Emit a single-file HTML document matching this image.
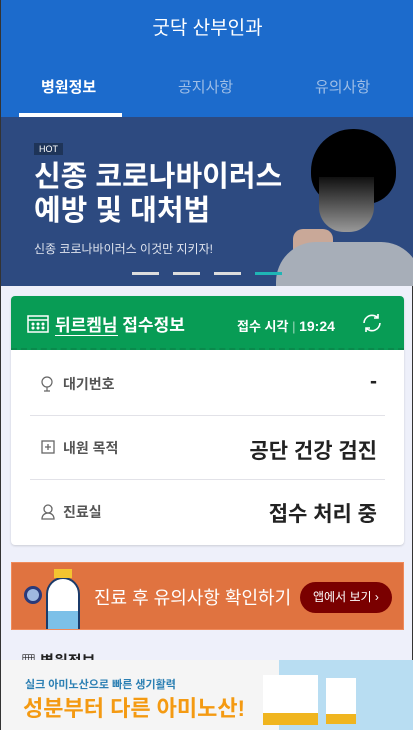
<!DOCTYPE html>
<html><head><meta charset="utf-8"><style>
*{margin:0;padding:0;box-sizing:border-box}
body{width:413px;height:730px;overflow:hidden;background:#eef0fa;font-family:"Liberation Sans","Noto Sans CJK KR",sans-serif;position:relative;border-left:1px solid #333;border-right:1px solid #333}
.hdr{position:absolute;left:0;top:0;width:413px;height:58px;background:#1c6bcc;color:#fff;font-size:19px;text-align:center;line-height:58px}
.tabs{position:absolute;left:0;top:58px;width:413px;height:59px;background:#1c6bcc}
.tab{position:absolute;top:18px;font-size:15px;color:#9dbde6}
.ban{position:absolute;left:0;top:117px;width:413px;height:169px;background:#2d4a80;overflow:hidden}
.card{position:absolute;left:10px;top:296px;width:393px;height:249px;background:#fff;border-radius:4px;box-shadow:0 1px 2px rgba(0,0,0,.15)}
.gh{height:54px;background:#089c55;border-radius:4px 4px 0 0;color:#fff;position:relative;border-bottom:2px dashed #0a8a4c}
.row{position:absolute;left:19px;right:19px;height:64px;border-bottom:1px solid #e2e2e8}
.lab{position:absolute;left:33px;top:22px;font-size:14px;color:#555;font-weight:bold}
.val{position:absolute;right:8px;font-weight:bold;color:#222;font-size:21px}
.ic{position:absolute;left:11px;top:24px}
</style></head><body>
<div class="hdr">굿닥 산부인과</div>
<div class="tabs">
<div class="tab" style="left:40px;color:#fff;font-weight:bold">병원정보</div>
<div class="tab" style="left:177px">공지사항</div>
<div class="tab" style="left:314px">유의사항</div>
<div style="position:absolute;left:18px;top:55px;width:103px;height:4px;background:#fff"></div>
</div>
<div class="ban">
<div style="position:absolute;left:33px;top:26px;background:#1e3458;color:#fff;font-size:9px;padding:1px 5px">HOT</div>
<div style="position:absolute;left:33px;top:43px;color:#fff;font-size:29px;font-weight:bold;line-height:34px">신종 코로나바이러스<br>예방 및 대처법</div>
<div style="position:absolute;left:33px;top:123px;color:#dfe4ee;font-size:12px">신종 코로나바이러스 이것만 지키자!</div>
<div style="position:absolute;left:310px;top:12px;width:85px;height:75px;border-radius:42px 42px 30px 30px;background:#000"></div>
<div style="position:absolute;left:318px;top:60px;width:55px;height:55px;background:linear-gradient(#111,#999);border-radius:0 0 25px 25px"></div>
<div style="position:absolute;left:292px;top:112px;width:40px;height:30px;background:#c9a898;border-radius:10px"></div>
<div style="position:absolute;left:275px;top:125px;width:145px;height:60px;background:#a7aeb8;border-radius:40px 40px 0 0"></div>
<div style="position:absolute;left:131px;top:155px;width:27px;height:3px;background:#ddd"></div>
<div style="position:absolute;left:172px;top:155px;width:27px;height:3px;background:#ddd"></div>
<div style="position:absolute;left:213px;top:155px;width:27px;height:3px;background:#ddd"></div>
<div style="position:absolute;left:254px;top:155px;width:27px;height:3px;background:#1fb5b5"></div>
</div>
<div class="card">
<div class="gh">
<svg style="position:absolute;left:16px;top:17px" width="22" height="20" viewBox="0 0 22 20" fill="none" stroke="#fff" stroke-width="1.5"><rect x="1" y="3" width="20" height="16"/><line x1="1" y1="7" x2="21" y2="7"/><circle cx="6" cy="11" r=".8" fill="#fff"/><circle cx="11" cy="11" r=".8" fill="#fff"/><circle cx="16" cy="11" r=".8" fill="#fff"/><circle cx="6" cy="15" r=".8" fill="#fff"/><circle cx="11" cy="15" r=".8" fill="#fff"/><circle cx="16" cy="15" r=".8" fill="#fff"/></svg>
<div style="position:absolute;left:44px;top:15px;font-size:17px;font-weight:bold"><span style="border-bottom:1px solid #fff">뒤르켐님</span> 접수정보</div>
<div style="position:absolute;left:226px;top:20px;font-size:13px;font-weight:bold">접수 시각 <span style="opacity:.6;font-weight:normal">|</span> <span style="font-size:14px">19:24</span></div>
<svg style="position:absolute;left:350px;top:16px" width="22" height="22" viewBox="0 0 22 22" fill="none" stroke="#fff" stroke-width="1.6"><path d="M3 11a8 8 0 0 1 14-5"/><path d="M19 11a8 8 0 0 1-14 5"/><path d="M17 2v4h-4"/><path d="M5 20v-4h4"/></svg>
</div>
<div class="row" style="top:56px"><svg class="ic" width="12" height="16" viewBox="0 0 12 16" fill="none" stroke="#666" stroke-width="1.2"><circle cx="6" cy="6" r="5"/><path d="M6 11v4M3 15h6"/></svg><div class="lab">대기번호</div><div class="val" style="top:18px">-</div></div>
<div class="row" style="top:120px"><svg class="ic" width="14" height="14" viewBox="0 0 14 14" fill="none" stroke="#666" stroke-width="1.3"><rect x="1" y="1" width="12" height="12"/><path d="M7 4v6M4 7h6"/></svg><div class="lab">내원 목적</div><div class="val" style="top:19px">공단 건강 검진</div></div>
<div class="row" style="top:184px;border:none"><svg class="ic" width="14" height="16" viewBox="0 0 14 16" fill="none" stroke="#666" stroke-width="1.3"><circle cx="7" cy="5" r="4"/><path d="M1 15c0-4 3-6 6-6s6 2 6 6z"/></svg><div class="lab">진료실</div><div class="val" style="top:18px">접수 처리 중</div></div>
</div>
<div style="position:absolute;left:10px;top:562px;width:393px;height:68px;background:#e07340;border:1px solid #f08a5a;overflow:hidden">
<div style="position:absolute;left:34px;top:14px;width:34px;height:56px;background:#fff;border-radius:17px 17px 4px 4px;border:2px solid #1b3b6a;border-bottom:none;overflow:hidden"><div style="position:absolute;bottom:0;left:0;right:0;height:22px;background:#7cc0e8"></div></div>
<div style="position:absolute;left:42px;top:6px;width:18px;height:9px;background:#f4c430"></div>
<div style="position:absolute;left:12px;top:23px;width:18px;height:18px;border-radius:50%;border:3px solid #2a3a7a;background:#9fb8e0"></div>
<div style="position:absolute;left:82px;top:21px;color:#fff;font-size:18px">진료 후 유의사항 확인하기</div>
<div style="position:absolute;left:288px;top:19px;width:92px;height:31px;background:#7a0000;border-radius:16px;color:#fff;font-size:12px;line-height:31px;padding-left:13px">앱에서 보기 ›</div>
</div>
<div style="position:absolute;left:20px;top:650px;font-size:15px;font-weight:bold;color:#222">▦ 병원정보</div>
<div style="position:absolute;left:0;top:660px;width:413px;height:70px;background:#f5f5f5">
<div style="position:absolute;right:0;top:0;width:135px;height:70px;background:#b8ddf2"></div>
<div style="position:absolute;left:24px;top:16px;font-size:11px;font-weight:bold;color:#2b7fb3">실크 아미노산으로 빠른 생기활력</div>
<div style="position:absolute;left:22px;top:31px;font-size:22px;font-weight:bold;color:#f49a12">성분부터 다른 아미노산!</div>
<div style="position:absolute;left:262px;top:15px;width:55px;height:50px;background:#fff;border-bottom:12px solid #f0b51f"></div>
<div style="position:absolute;left:325px;top:18px;width:30px;height:46px;background:#fff;border-bottom:10px solid #f0b51f"></div>
</div>
</body></html>
